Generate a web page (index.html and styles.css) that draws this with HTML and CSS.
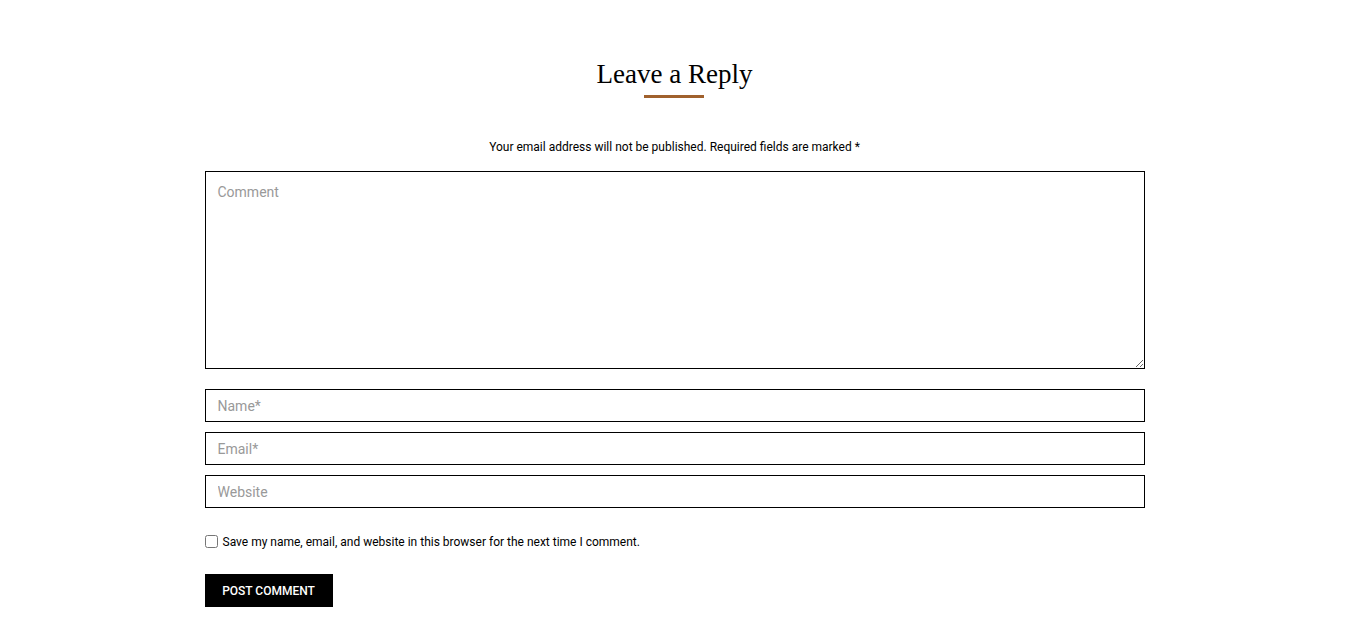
FILE: index.html
```html
<!DOCTYPE html>
<html lang="en">
<head>
<meta charset="utf-8">
<title>Leave a Reply</title>
<link rel="stylesheet" href="styles.css">
</head>
<body>
<section class="respond">
  <h3 class="reply-title">Leave a Reply</h3>
  <div class="title-bar"></div>
  <form class="comment-form">
    <p class="notes">Your email address will not be published. Required fields are marked <span class="required">*</span></p>
    <textarea class="field comment" placeholder="Comment"></textarea>
    <input class="field input first" type="text" placeholder="Name*">
    <input class="field input" type="email" placeholder="Email*">
    <input class="field input" type="url" placeholder="Website">
    <label class="cookies"><input type="checkbox" class="check"> Save my name, email, and website in this browser for the next time I comment.</label>
    <button type="button" class="submit">POST COMMENT</button>
  </form>
</section>
</body>
</html>
```
FILE: styles.css
```css
html, body {
  margin: 0;
  padding: 0;
  background: #fff;
}
body {
  font-family: Roboto, "Liberation Sans", sans-serif;
  color: #000;
}
.respond {
  width: 940px;
  margin: 0 auto;
  padding-top: 56px;
  display: flex;
  flex-direction: column;
  align-items: center;
}
.reply-title {
  margin: 0;
  font-family: "Liberation Serif", "DejaVu Serif", serif;
  font-weight: 400;
  font-size: 27px;
  line-height: 36px;
  color: #000;
}
.title-bar {
  width: 60px;
  height: 3px;
  background: #a0612d;
  margin-top: 3px;
  margin-left: -2px;
}
.comment-form {
  width: 100%;
  display: flex;
  flex-direction: column;
  margin-top: 39px;
}
.notes {
  margin: 0 0 14px;
  text-align: center;
  font-size: 12px;
  line-height: 20px;
}
.field {
  box-sizing: border-box;
  width: 100%;
  border: 1px solid #000;
  border-radius: 0;
  font-family: Roboto, "Liberation Sans", sans-serif;
  font-size: 14px;
  color: #000;
  padding: 0 12px;
  background: #fff;
  outline: none;
}
.field::placeholder {
  color: #999;
}
.comment {
  height: 198px;
  padding-top: 10px;
  line-height: 20px;
  margin: 0 0 20px;
  resize: vertical;
}
.input {
  height: 33px;
  margin: 0 0 10px;
}
.cookies {
  display: flex;
  align-items: center;
  gap: 5px;
  margin-top: 14px;
  font-size: 12px;
  line-height: 20px;
}
.check {
  margin: -2px 0 0;
  width: 13px;
  height: 13px;
}
.submit {
  align-self: flex-start;
  margin-top: 22px;
  width: 128px;
  height: 33px;
  border: 0;
  border-radius: 0;
  background: #000;
  color: #fff;
  font-family: Roboto, "Liberation Sans", sans-serif;
  font-weight: 500;
  font-size: 12px;
  padding: 0;
  cursor: pointer;
}
```
